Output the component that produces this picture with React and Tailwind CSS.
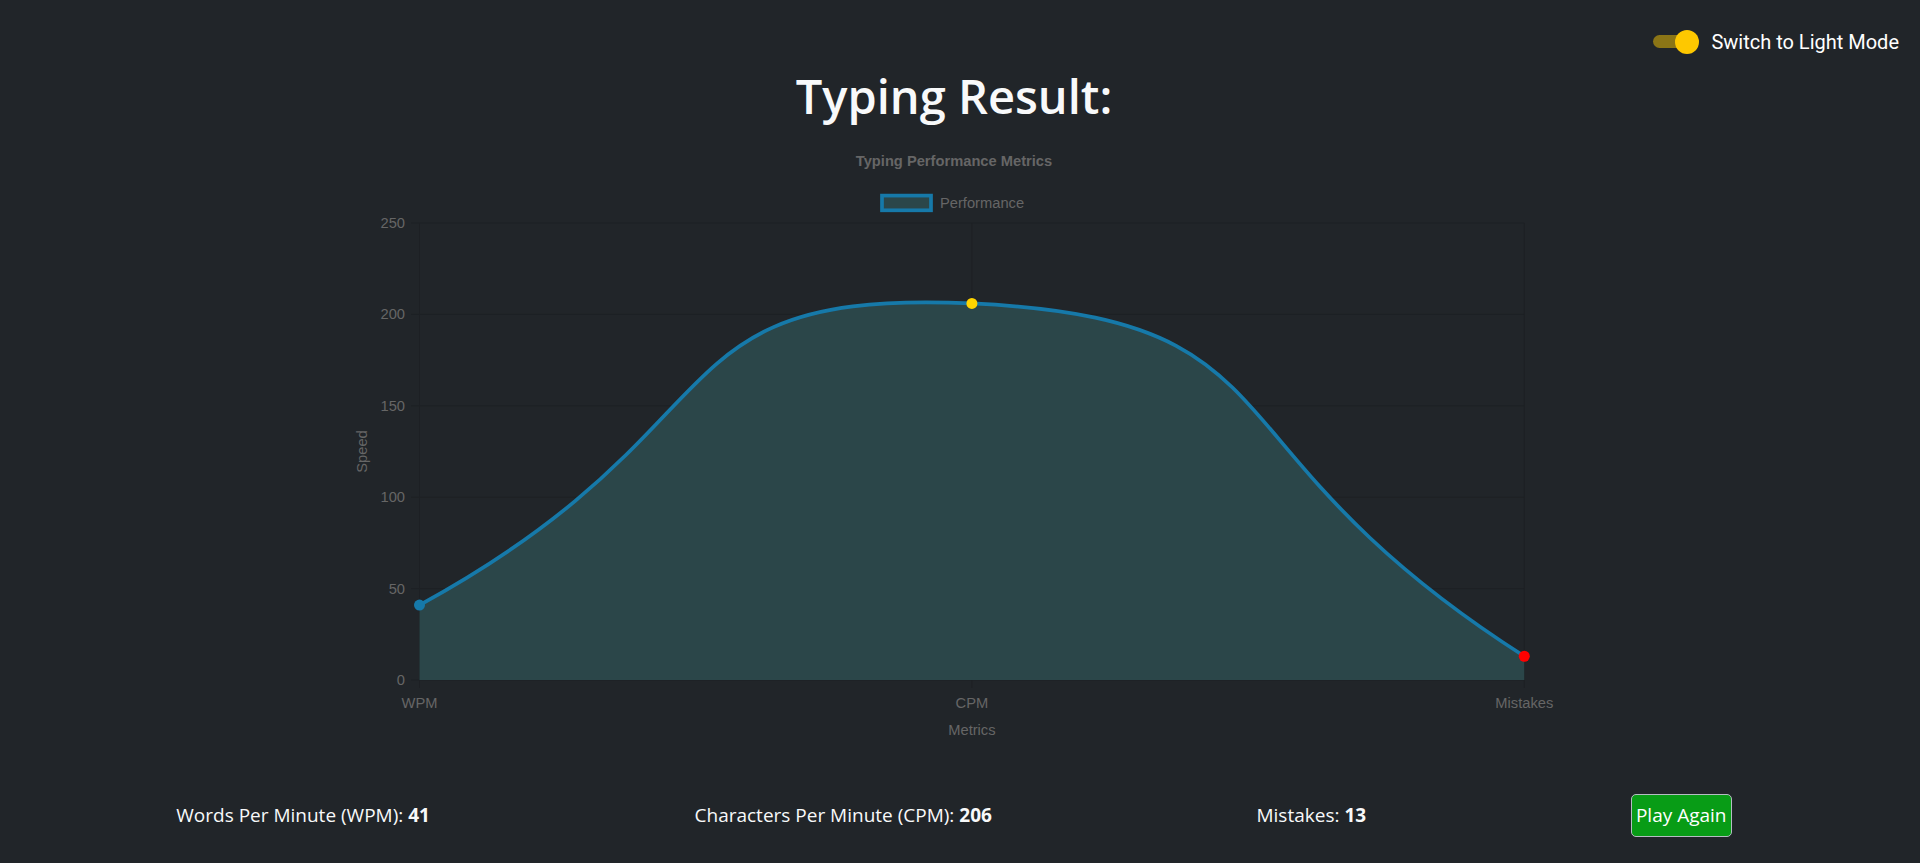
import React from 'react';

// chart geometry, page coordinates (svg viewBox matches page)
const X0 = 419.5;
const X1 = 971.9;
const X2 = 1524.3;
const Y_TOP = 223;
const Y_ZERO = 680;
const yOf = (v) => Y_ZERO - (v * (Y_ZERO - Y_TOP)) / 250;

const LINE = '#1679a9';
const FILL = '#2b4649';
const GRID = '#1d2024';
const TICK = '#666666';

const stats = { wpm: 41, cpm: 206, mistakes: 13 };

// cardinal spline through the three points (tension ~0.6)
const curve = `M ${X0} ${yOf(stats.wpm)} C 750.9 424.1, 647.2 288.4, ${X1} ${yOf(stats.cpm)} C 1310.1 319.3, 1192.9 444.7, ${X2} ${yOf(stats.mistakes)}`;

const chartFont = { fontFamily: '"Liberation Sans", Arial, sans-serif', fontSize: 14.7 };

const PerformanceChart = () => {
  const ticks = [0, 50, 100, 150, 200, 250];
  const xs = [
    { x: X0, label: 'WPM' },
    { x: X1, label: 'CPM' },
    { x: X2, label: 'Mistakes' },
  ];

  return (
    <svg width="1200" height="622" viewBox="354 128 1200 622" className="block" style={chartFont}>
      {/* title + legend */}
      <text x="954" y="161" textAnchor="middle" dominantBaseline="central" fill={TICK} fontWeight="bold">
        Typing Performance Metrics
      </text>
      <rect x="882" y="195.6" width="49" height="14.7" fill={FILL} stroke={LINE} strokeWidth="3.7" />
      <text x="940" y="203" dominantBaseline="central" fill={TICK}>Performance</text>

      {/* grid */}
      {ticks.map((t) => (
        <line key={t} x1="411" x2={X2} y1={yOf(t)} y2={yOf(t)} stroke={GRID} strokeWidth="1" />
      ))}
      {xs.map((d) => (
        <line key={d.label} x1={d.x} x2={d.x} y1={Y_TOP} y2="688" stroke={GRID} strokeWidth="1" />
      ))}

      {/* area + line */}
      <path d={`${curve} L ${X2} ${Y_ZERO} L ${X0} ${Y_ZERO} Z`} fill={FILL} />
      <path d={curve} fill="none" stroke={LINE} strokeWidth="3.7" />
      <circle cx={X0} cy={yOf(stats.wpm)} r="5.5" fill={LINE} />
      <circle cx={X1} cy={yOf(stats.cpm)} r="5.5" fill="#ffd500" />
      <circle cx={X2} cy={yOf(stats.mistakes)} r="5.5" fill="#ff0000" />

      {/* y ticks */}
      {ticks.map((t) => (
        <text key={t} x="405" y={yOf(t)} textAnchor="end" dominantBaseline="central" fill={TICK}>
          {t}
        </text>
      ))}
      <text
        x="362"
        y="451.5"
        textAnchor="middle"
        dominantBaseline="central"
        fill={TICK}
        transform="rotate(-90 362 451.5)"
      >
        Speed
      </text>

      {/* x ticks */}
      {xs.map((d) => (
        <text key={d.label} x={d.x} y="703" textAnchor="middle" dominantBaseline="central" fill={TICK}>
          {d.label}
        </text>
      ))}
      <text x={X1} y="730" textAnchor="middle" dominantBaseline="central" fill={TICK}>Metrics</text>
    </svg>
  );
};

const App = () => {
  return (
    <div
      className="min-h-screen bg-[#212529] text-[#f8f9fa]"
      style={{ fontFamily: '"Open Sans", "Noto Sans", sans-serif' }}
    >
      {/* theme toggle */}
      <div className="flex justify-end items-center h-[64px] pt-[19px] pr-[21px]">
        <div className="flex items-center gap-[12px]">
          <div className="relative w-[46px] h-[24px] flex items-center">
            <div className="w-[42px] h-[13px] rounded-full bg-[#8b7516]" />
            <div className="absolute right-0 top-0 h-[24px] w-[24px] rounded-full bg-[#fec800]" />
          </div>
          <span className="text-[20px] text-white" style={{ fontFamily: 'Roboto, sans-serif' }}>
            Switch to Light Mode
          </span>
        </div>
      </div>

      <div className="pl-[44px] pr-[56px]">
        <h1 className="text-center text-[47px] leading-[64px] font-semibold text-[#f8f9fa]">Typing Result:</h1>

        <div className="flex justify-center">
          <PerformanceChart />
        </div>

        {/* summary row */}
        <div className="flex justify-around items-center mt-[44px] text-[19px]">
          <p>
            Words Per Minute (WPM): <strong className="font-bold">{stats.wpm}</strong>
          </p>
          <p>
            Characters Per Minute (CPM): <strong className="font-bold">{stats.cpm}</strong>
          </p>
          <p>
            Mistakes: <strong className="font-bold">{stats.mistakes}</strong>
          </p>
          <button className="h-[43px] w-[101px] flex items-center justify-center rounded-[5px] border border-[#b5bcc2] bg-[#089c16] text-white">
            Play Again
          </button>
        </div>
      </div>
    </div>
  );
};

export default App;
